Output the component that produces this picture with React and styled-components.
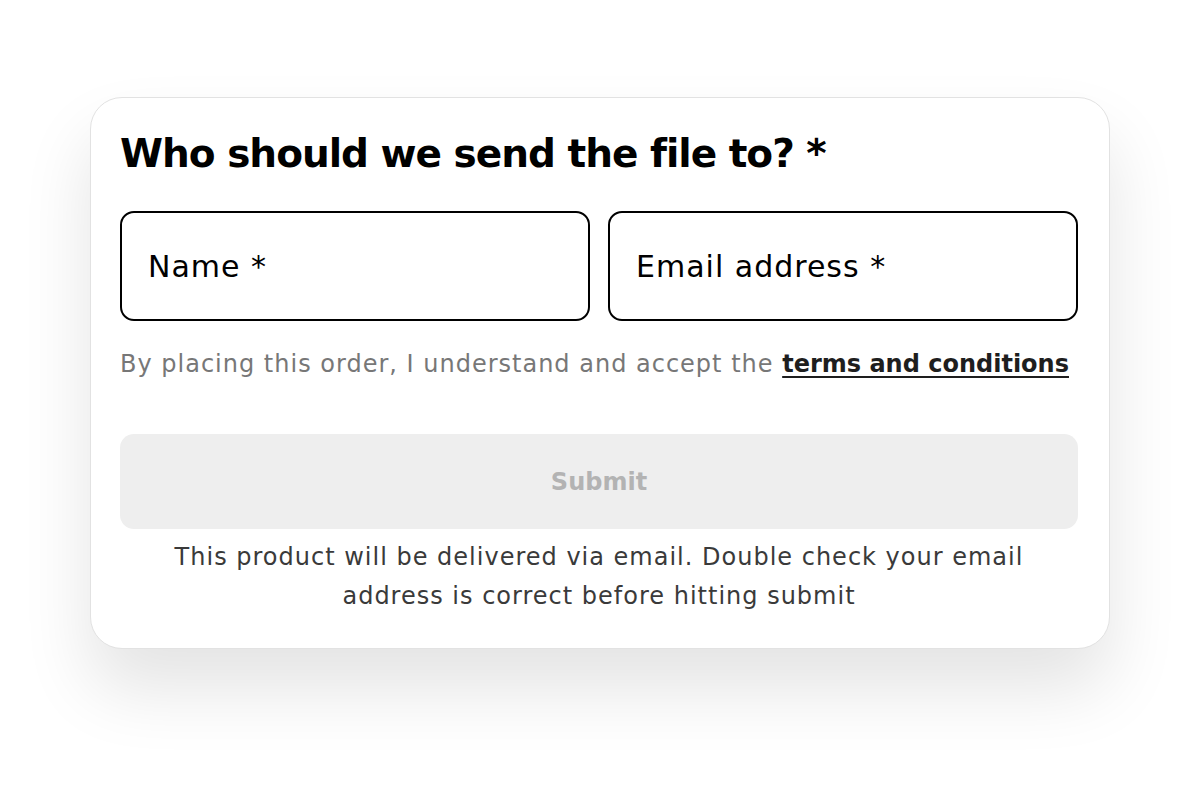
import React from 'react'
import styled, { createGlobalStyle } from 'styled-components'

const GlobalStyle = createGlobalStyle`
  body {
    margin: 0;
    background: #ffffff;
    font-family: "DejaVu Sans", Inter, sans-serif;
  }
`

const Page = styled.div`
  display: flex;
  justify-content: center;
  align-items: flex-start;
  padding-top: 97px;
  min-height: 790px;
  box-sizing: border-box;
`

const Card = styled.form`
  width: 1020px;
  box-sizing: border-box;
  background: #fff;
  border: 1px solid #e2e2e2;
  border-radius: 32px;
  padding: 28px 31px 32px 29px;
  box-shadow: 0 40px 70px rgba(0, 0, 0, 0.11);
  display: flex;
  flex-direction: column;
`

const Title = styled.h2`
  margin: 0;
  font-size: 39px;
  line-height: 56px;
  font-weight: 700;
  letter-spacing: -1px;
  color: #000;
`

const Fields = styled.div`
  display: grid;
  grid-template-columns: minmax(0, 1fr) minmax(0, 1fr);
  gap: 18px;
  margin-top: 29px;
`

const Field = styled.input`
  width: 100%;
  height: 110px;
  box-sizing: border-box;
  border: 2px solid #000;
  border-radius: 14px;
  padding: 0 26px;
  font-family: inherit;
  font-size: 30px;
  letter-spacing: 1px;
  color: #000;
  outline: none;
  &::placeholder {
    color: #000;
  }
`

const Terms = styled.p`
  margin: 25px 0 0;
  font-size: 24px;
  line-height: 36px;
  letter-spacing: 1px;
  color: #777;
  white-space: nowrap;
`

const TermsLink = styled.a`
  color: #1e1e1e;
  font-weight: 700;
  letter-spacing: 0;
  text-decoration: underline;
  text-underline-offset: 4px;
  text-decoration-thickness: 2px;
`

const SubmitButton = styled.button`
  margin-top: 52px;
  height: 95px;
  border: none;
  border-radius: 14px;
  background: #eeeeee;
  color: #b3b3b3;
  font-family: inherit;
  font-size: 24px;
  font-weight: 700;
`

const Note = styled.p`
  margin: 9px auto 0;
  max-width: 880px;
  text-align: center;
  font-size: 24px;
  line-height: 39px;
  letter-spacing: 1px;
  color: #3a3a3a;
`

export default function App() {
  return (
    <>
      <GlobalStyle />
      <Page>
        <Card onSubmit={(e) => e.preventDefault()}>
          <Title>Who should we send the file to? *</Title>
          <Fields>
            <Field type="text" placeholder="Name *" />
            <Field type="email" placeholder="Email address *" />
          </Fields>
          <Terms>
            By placing this order, I understand and accept the{' '}
            <TermsLink href="#">terms and conditions</TermsLink>
          </Terms>
          <SubmitButton type="submit" disabled>Submit</SubmitButton>
          <Note>
            This product will be delivered via email. Double check your email address is correct before hitting submit
          </Note>
        </Card>
      </Page>
    </>
  )
}
